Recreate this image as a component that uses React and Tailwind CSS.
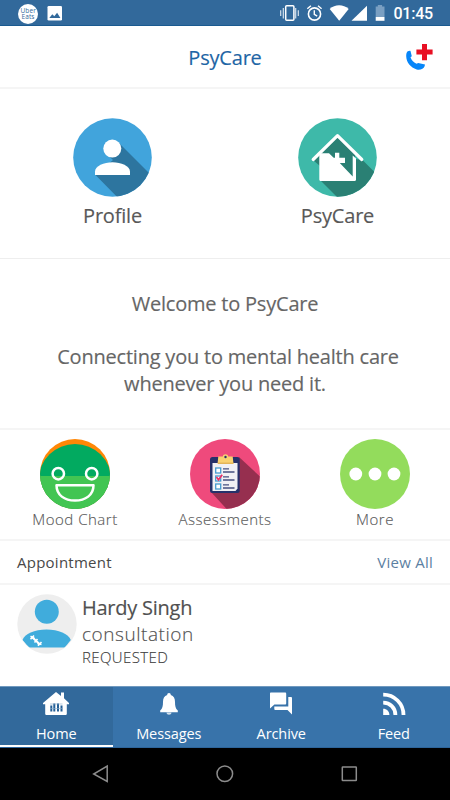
import React from 'react';

function StatusBar() {
  return (
    <div className="flex h-[26px] shrink-0 items-center border-b border-[#1a5a90] bg-[#32699b]">
      <div className="ml-[18px] mt-0.5 flex size-5 items-center justify-center rounded-full bg-white">
        <span className="w-[15px] text-center text-[6.5px] leading-[5.5px] tracking-[0.1px] text-[#32699b]">Uber Eats</span>
      </div>
      <svg className="ml-[9px]" width="16" height="26" viewBox="47 0 16 26">
        <rect x="47.5" y="6" width="14.5" height="14.5" rx="1.3" fill="#fff" />
        <path d="M49.3 18l3-3.8 2 2 2.8-3.5 3.3 5.3z" fill="#32699b" />
      </svg>
      <svg className="ml-auto" width="110" height="26" viewBox="278 0 110 26" fill="none">
        <path d="M280.7 10.3v5.8M283.3 8v10.5M295.7 8v10.5M298.3 10.3v5.8" stroke="#d5e2ed" strokeWidth="1.2" />
        <rect x="285.7" y="5.7" width="8.2" height="14.6" rx="1" stroke="#fff" strokeWidth="1.5" />
        <circle cx="314.5" cy="14" r="6.1" stroke="#fff" strokeWidth="1.6" />
        <path d="M314.3 10.3v4l2.9 1.8M307.3 8.8l3.6-3.1M318 5.7l3.6 3.1" stroke="#fff" strokeWidth="1.4" />
        <path d="M329.7 9c5.2-5 13.6-5 19 0l-9.5 11.7z" fill="#fff" />
        <path d="M367 5.7v15.1h-15.5z" fill="#fff" />
        <path d="M375.7 6.5h2.1V5h4.3v1.5h2.4V17h-8.8z" fill="#7a9fc2" />
        <path d="M375.7 17h8.8v3.8h-8.8z" fill="#fff" />
      </svg>
      <span className="ml-[5px] mr-[17px] mt-[3px] font-['Roboto',sans-serif] text-[16px] font-medium leading-5 tracking-[-0.2px] text-white">01:45</span>
    </div>
  );
}

function Header() {
  return (
    <header className="grid h-[63px] shrink-0 grid-cols-[1fr_auto_1fr] items-center border-b-2 border-[#f5f5f5]">
      <span />
      <h1 className="mt-px text-[20px] leading-[27px] tracking-[-0.2px] text-[#1e65a5]">PsyCare</h1>
      <svg className="mr-[17px] justify-self-end" width="28" height="28" viewBox="405 43 28 28">
        <path d="M406.500 53.200c.6-1.700 2-2.500 4-2.300l1.300 5.300-1.300 1c.8 2.600 3 5.100 6 6.500l1.700-.7 6.800 1.500c-.2 2.600-1.700 4.400-4.300 5.100-1.500.3-3 .1-4-.2-6-1.900-10.300-7-10.500-13.200 0-1.100 0-2.100.3-3z" fill="#0786f9" />
        <path d="M422 44h5v5.600h5.600v5H427v5.600h-5v-5.600h-5.600v-5h5.600z" fill="#e80f23" />
      </svg>
    </header>
  );
}

function ProfileIcon() {
  return (
    <svg width="79" height="79" viewBox="0 0 79 79">
      <clipPath id="profile-disc"><circle cx="39.5" cy="39.5" r="39.3" /></clipPath>
      <g clipPath="url(#profile-disc)">
        <path d="M0 0h79v79H0z" fill="#41a4dc" />
        <path d="M45 24l38 38v26H53L22.5 57 40 42l-6-6z" fill="#2d759f" />
      </g>
      <circle cx="39.3" cy="30.6" r="9" fill="#fff" />
      <path d="M22 57v-3.5c0-5.5 9-9.3 17.5-9.3S57 48 57 53.5V57z" fill="#fff" />
    </svg>
  );
}

function HouseIcon() {
  return (
    <svg width="79" height="79" viewBox="0 0 79 79">
      <clipPath id="house-disc"><circle cx="39.5" cy="39.5" r="39.3" /></clipPath>
      <g clipPath="url(#house-disc)">
        <path d="M0 0h79v79H0z" fill="#3eb9a9" />
        <path d="M64.500 42l25 25v20H47L22 62V48l-7-6 24.500-24L57 35v6z" fill="#2a8074" />
      </g>
      <path d="M21.300 61.500V35.300h9.700l4.700 4.400H37v-5h4.300v5H47v5.300h-5.200l12.900 13.500V37.500l3.300 3v21c0 .9-.5 1.500-1.500 1.500H22.800c-1 0-1.500-.6-1.500-1.500z" fill="#fff" />
      <path d="M15.200 41.500l24.300-23.900 24.300 23.900" fill="none" stroke="#fff" strokeWidth="3.200" strokeLinecap="round" strokeLinejoin="round" />
    </svg>
  );
}

function MoodIcon() {
  return (
    <svg width="70" height="70" viewBox="0 0 70 70">
      <clipPath id="mood-disc"><circle cx="35" cy="35" r="35" /></clipPath>
      <g clipPath="url(#mood-disc)">
        <path d="M0 0h70v70H0z" fill="#ff8706" />
        <ellipse cx="35" cy="40" rx="36" ry="35" fill="#02aa60" />
        <path d="M0 37h70v33H0z" fill="#42c552" />
      </g>
      <g fill="none" stroke="#fff" strokeWidth="2.500" strokeLinejoin="round">
        <circle cx="18.300" cy="34.700" r="5.700" />
        <circle cx="51.700" cy="34.700" r="5.700" />
        <path d="M16.500 46.300h37c0 9.800-8 15.300-18.500 15.300s-18.500-5.500-18.500-15.300z" />
      </g>
    </svg>
  );
}

function AssessmentIcon() {
  return (
    <svg width="70" height="70" viewBox="0 0 70 70">
      <clipPath id="assess-disc"><circle cx="35" cy="35" r="35" /></clipPath>
      <g clipPath="url(#assess-disc)">
        <path d="M0 0h70v70H0z" fill="#ef4a7c" />
        <path d="M49 18l28 26v34H44L21 53z" fill="#962f4f" />
      </g>
      <rect x="20" y="18" width="29.700" height="36" rx="2.500" fill="#26316a" />
      <path d="M22.500 24h25v25.500l-2 2.500h-23z" fill="#f1f1f4" />
      <path d="M28.300 17.500h4.500c.2-3 5.200-3 5.400 0h4.500l.8 7.500h-16z" fill="#f9d170" />
      <path d="M28 24.200h15.500" stroke="#d9a94e" strokeWidth="1" />
      <circle cx="35.500" cy="18" r="1.200" fill="#26316a" />
      <g fill="#fff" stroke="#459bcf" strokeWidth="1.300">
        <rect x="25.700" y="29" width="5" height="5" />
        <rect x="25.700" y="37" width="5" height="5" />
        <rect x="25.700" y="45" width="5" height="5" />
      </g>
      <path d="M26.500 38l2 2.800 3.700-5" fill="none" stroke="#ed2f63" strokeWidth="1.700" />
      <path d="M33 29.800h6M33 33h11.500M33 37.800h6M33 41h11.500M33 45.800h6M33 49h11.500" stroke="#46507f" strokeWidth="1.300" />
    </svg>
  );
}

function MoreIcon() {
  return (
    <svg width="70" height="70" viewBox="0 0 70 70">
      <circle cx="35" cy="35" r="35" fill="#93dc5c" />
      <circle cx="15.800" cy="35" r="6.400" fill="#fff" />
      <circle cx="35" cy="35" r="6.400" fill="#fff" />
      <circle cx="54" cy="35" r="6.400" fill="#fff" />
    </svg>
  );
}

function Avatar() {
  return (
    <svg className="shrink-0" width="60" height="60" viewBox="0 0 60 60">
      <clipPath id="avatar-disc"><circle cx="30" cy="30" r="29.500" /></clipPath>
      <circle cx="30" cy="30" r="29.700" fill="#eee" />
      <g clipPath="url(#avatar-disc)" fill="#40acdc">
        <circle cx="29.800" cy="17.700" r="12" />
        <path d="M5.500 46c2-6 12-10.500 24-10.500S51.500 40 53.800 46l-6 7.500H12z" />
      </g>
      <path d="M15.500 43.500l7.500 7" stroke="#fff" strokeWidth="2" />
      <path d="M17 41.500l-3.500 3.800M20.500 45l-3 3.500M24.500 48l-3.500 3.800M13.500 42.300l4.200 2.500M20.500 49.500l4 1" stroke="#fff" strokeWidth="1.600" />
    </svg>
  );
}

function HomeGlyph() {
  return (
    <svg width="28" height="26" viewBox="0 0 28 26">
      <path d="M14 1l5 4V1.500h3V7.300L27 12v1.200h-2.200v10L24 24H4l-.8-.8v-10H1V12z" fill="#fff" />
      <path d="M9.300 14.500v6M12.300 12.500v8M16 12.500v8M19.500 14.500v6" stroke="#245f96" strokeWidth="2" />
      <path d="M8 13h12.500M8 17.500h12.500" stroke="#8aaccb" strokeWidth="0.600" />
    </svg>
  );
}

function BellGlyph() {
  return (
    <svg width="28" height="26" viewBox="0 0 28 26" fill="#fff">
      <path d="M14 2c1.200 0 1.800.8 1.800 2 3 1 4.200 3.600 4.200 7 0 4 .5 6.500 2.800 8.500v1.800H5.200v-1.800C7.500 17.500 8 15 8 11c0-3.400 1.200-6 4.200-7 0-1.200.6-2 1.800-2z" />
      <path d="M11.500 21.500h5c-.2 3-4.800 3-5 0z" fill="#d5e2ed" />
    </svg>
  );
}

function ArchiveGlyph() {
  return (
    <svg width="28" height="26" viewBox="0 0 28 26" fill="#fff">
      <path d="M4 1.500h14c.8 0 1.200.4 1.200 1.200v9.600c0 .8-.4 1.200-1.200 1.200H7.400L3 17.500v-15c0-.6.400-1 1-1z" />
      <path d="M21.300 6h2.500c.8 0 1.200.4 1.200 1.200v16.200L20.500 19H8.500c-.8 0-1.200-.4-1.200-1.200v-2.300h14z" />
    </svg>
  );
}

function FeedGlyph() {
  return (
    <svg width="28" height="26" viewBox="0 0 28 26" fill="none">
      <path d="M3.200 17.700c3.500 0 6.200 2.700 6.200 6.200H3.200z" fill="#fff" />
      <path d="M3.200 11.700c6.800 0 12.200 5.300 12.200 12.200M3.200 3.600c11.200 0 20.300 9 20.300 20.300" stroke="#fff" strokeWidth="3.800" />
    </svg>
  );
}

const topLinks = [
  { label: 'Profile', Icon: ProfileIcon },
  { label: 'PsyCare', Icon: HouseIcon },
];

const tools = [
  { label: 'Mood Chart', Icon: MoodIcon },
  { label: 'Assessments', Icon: AssessmentIcon },
  { label: 'More', Icon: MoreIcon },
];

const tabs = [
  { label: 'Home', Icon: HomeGlyph, active: true },
  { label: 'Messages', Icon: BellGlyph },
  { label: 'Archive', Icon: ArchiveGlyph },
  { label: 'Feed', Icon: FeedGlyph },
];

export default function App() {
  return (
    <div className="flex h-[800px] w-[450px] flex-col overflow-hidden bg-white font-['Open_Sans',sans-serif]">
      <StatusBar />
      <div className="contents [-webkit-text-stroke:0.15px]">
        <Header />
        <section className="grid h-[170px] shrink-0 grid-cols-2 border-b border-[#eee] pt-[29px]">
          {topLinks.map(({ label, Icon }) => (
            <div key={label} className="flex flex-col items-center">
              <Icon />
              <span className="mt-[5px] text-[20px] leading-[27px] tracking-[-0.2px] text-[#585858]">{label}</span>
            </div>
          ))}
        </section>
        <section className="flex h-[171px] shrink-0 flex-col items-center border-b-2 border-[#f5f5f5] pt-[31px] text-[20px] leading-[27px] tracking-[-0.21px] text-[#666]">
          <p>Welcome to PsyCare</p>
          <p className="mt-[26px] pl-1.5">Connecting you to mental health care</p>
          <p>whenever you need it.</p>
        </section>
        <section className="grid h-[111px] shrink-0 grid-cols-3 border-b-2 border-[#f5f5f5] pt-[9px]">
          {tools.map(({ label, Icon }) => (
            <div key={label} className="flex flex-col items-center">
              <Icon />
              <span className="text-[15px] font-light leading-5 tracking-[0.5px] text-[#5a5a5a]">{label}</span>
            </div>
          ))}
        </section>
        <section className="flex h-[44px] shrink-0 items-center justify-between border-b-2 border-[#f5f5f5] px-[17px] text-[15px] leading-5 tracking-[0.25px] [-webkit-text-stroke:0px]">
          <h2 className="text-[#484848]">Appointment</h2>
          <span className="text-[#5c7fa2]">View All</span>
        </section>
        <section className="flex flex-1 pl-[17px] pt-[9px]">
          <Avatar />
          <div className="ml-[5px] flex flex-col">
            <span className="text-[20px] leading-[27px] tracking-[-0.25px] text-[#505050]">Hardy Singh</span>
            <span className="text-[19px] font-light leading-[26px] tracking-[0.55px] text-[#505050]">consultation</span>
            <span className="text-[15px] font-light leading-5 tracking-[0.4px] text-[#404040]">REQUESTED</span>
          </div>
        </section>
      </div>
      <nav className="grid h-[62px] shrink-0 grid-cols-4 border-b border-t border-b-[#2d649a] border-t-[#7099bf] bg-[#3873aa]">
        {tabs.map(({ label, Icon, active }) => (
          <div
            key={label}
            className={active
              ? 'flex flex-col items-center border-b-2 border-white bg-[#32699b] pt-[4px]'
              : 'flex flex-col items-center pt-[4px]'}
          >
            <Icon />
            <span className="mt-[7px] text-[14.5px] leading-5 tracking-[-0.1px] text-white">{label}</span>
          </div>
        ))}
      </nav>
      <footer className="flex h-[52px] shrink-0 items-center bg-black">
        <svg width="450" height="52" viewBox="0 748 450 52" fill="none" stroke="#8c8c8c" strokeWidth="1.500">
          <path d="M107.200 766v15.500L93.700 774z" />
          <circle cx="224.800" cy="773.800" r="7.800" />
          <rect x="342.300" y="767" width="14" height="13.500" rx="0.500" />
        </svg>
      </footer>
    </div>
  );
}
